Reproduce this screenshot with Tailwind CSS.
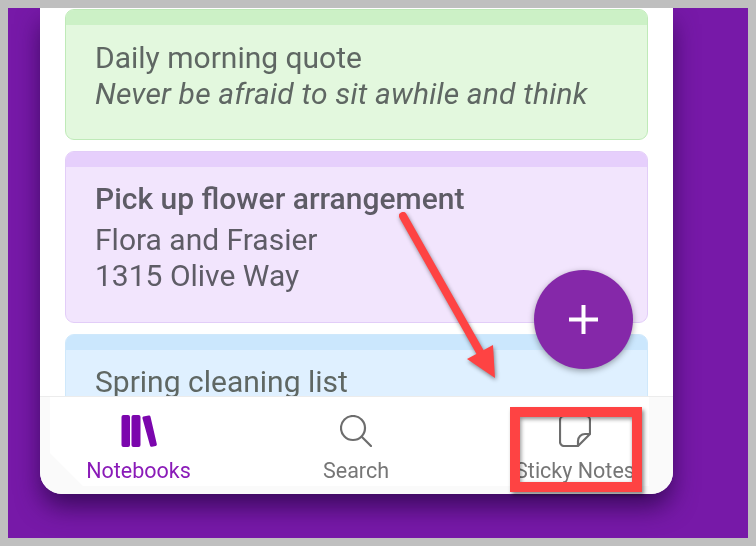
<!DOCTYPE html>
<html><head><meta charset="utf-8"><script src="https://cdn.jsdelivr.net/npm/@tailwindcss/browser@4"></script></head>
<body class="m-0">
<div class="relative w-[756px] h-[546px] overflow-hidden border-[8px] border-[#bfbfbf] bg-[#7719a8] font-['Roboto',sans-serif]">
 <div class="relative w-full h-full blur-[0.5px]">
  <div class="ml-[32px] w-[633px] h-[486px] bg-white rounded-b-[22px] shadow-[0_14px_26px_-2px_rgba(40,5,70,0.8)] flex flex-col overflow-hidden">
    <div class="flex-1 min-h-0 overflow-hidden px-[25px] pt-[1px] flex flex-col gap-[11px] text-[30px] leading-[36px] text-[#5f6763]">
      <div class="h-[131px] shrink-0 rounded-[9px] border border-[#bfeab8] bg-[#e3f8de] overflow-hidden">
        <div class="h-[15px] bg-[#ccf1c6]"></div>
        <div class="pl-[29px] pt-[15px]">
          <p>Daily morning quote</p>
          <p class="italic tracking-[0.18px]">Never be afraid to sit awhile and think</p>
        </div>
      </div>
      <div class="h-[172px] shrink-0 rounded-[9px] border border-[#e2cdf8] bg-[#f2e5fd] overflow-hidden">
        <div class="h-[15px] bg-[#e6cffc]"></div>
        <div class="pl-[29px] pt-[14px] text-[#5e5c66]">
          <p class="font-medium">Pick up flower arrangement</p>
          <p class="mt-[5px]">Flora and Frasier</p>
          <p>1315 Olive Way</p>
        </div>
      </div>
      <div class="h-[80px] shrink-0 rounded-t-[9px] border border-[#cfe8fb] bg-[#dff0ff] overflow-hidden">
        <div class="h-[15px] bg-[#cbe7fd]"></div>
        <div class="pl-[29px] pt-[14px]"><p>Spring cleaning list</p></div>
      </div>
    </div>
    <div class="h-[98px] shrink-0 bg-[#fafafa] border-t border-[#ececec] pl-[10px] pb-[8px] pr-[24px]">
      <div class="h-full bg-white [clip-path:polygon(0_0,100%_0,100%_100%,33px_100%,0_56px)] grid grid-cols-[177px_258px_180px] text-[21.5px] leading-[24px] text-[#767676]">
        <div class="flex flex-col items-center pt-[18px] text-[#8a1bb8]">
          <svg class="w-[36px] h-[32px]" viewBox="0 0 36 32" fill="#7b06ad"><rect x="0.500" y="0" width="8.500" height="32" rx="2"/><rect x="10.500" y="0" width="9" height="32" rx="2"/><path d="M22.500 1.500 27.500 0.500c1-.2 1.800.3 2 1.200L35.800 29c.2 1-.3 1.800-1.200 2L31 31.800c-1 .2-1.800-.3-2-1.200L21.500 3.500c-.2-1 .1-1.800 1-2z"/></svg>
          <span class="mt-[12px]">Notebooks</span>
        </div>
        <div class="flex flex-col items-center pt-[18px]">
          <svg class="w-[32px] h-[32px]" viewBox="0 0 32 32" fill="none" stroke="#6d6d6d" stroke-width="2.200" stroke-linecap="round"><circle cx="13" cy="13" r="12"/><path d="M22 22 31 31"/></svg>
          <span class="mt-[12px]">Search</span>
        </div>
        <div class="flex flex-col items-center pt-[18px]">
          <svg class="w-[32px] h-[32px]" viewBox="0 0 32 32" fill="none" stroke="#6d6d6d" stroke-width="2.200" stroke-linejoin="round"><path d="M5 1h22a4 4 0 0 1 4 4v14L19 31H5a4 4 0 0 1-4-4V5a4 4 0 0 1 4-4z"/><path d="M31 19h-5a7 7 0 0 0-7 7v5"/></svg>
          <span class="mt-[12px]">Sticky Notes</span>
        </div>
      </div>
    </div>
  </div>
  <button class="absolute left-[526px] top-[262px] w-[99px] h-[99px] rounded-full bg-[#8528a9] shadow-[0_2px_6px_rgba(0,0,0,0.35)] flex items-center justify-center">
    <svg class="w-[29px] h-[29px]" viewBox="0 0 29 29" stroke="#fff" stroke-width="4"><path d="M14.500 0v29M0 14.500h29"/></svg>
  </button>
  <svg class="absolute left-[380px] top-[200px] w-[120px] h-[180px] overflow-visible [filter:drop-shadow(1px_2px_2px_rgba(0,0,0,0.45))]" viewBox="0 0 120 180">
    <path d="M15 8 92 144" stroke="#fe4343" stroke-width="8" stroke-linecap="round" fill="none"/>
    <path d="M107 170 105 137 79 151z" fill="#fe4343"/>
  </svg>
  <div class="absolute left-[502px] top-[399px] w-[132px] h-[85px] border-[10px] border-[#fe4343] shadow-[2px_3px_4px_rgba(0,0,0,0.45),inset_1px_2px_4px_rgba(0,0,0,0.45)]"></div>
 </div>
</div>
</body></html>
